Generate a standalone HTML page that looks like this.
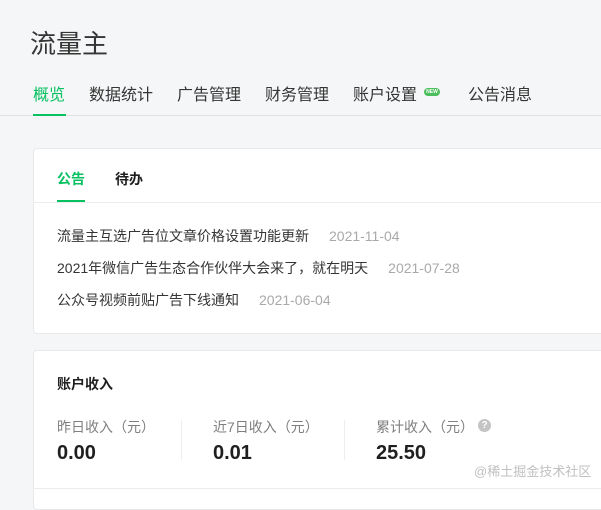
<!DOCTYPE html><html><head><meta charset="utf-8"><style>
*{margin:0;padding:0;box-sizing:border-box}
body{width:601px;height:492px;overflow:hidden;background:#f5f6f7;font-family:"Liberation Sans","Noto Sans CJK SC",sans-serif;color:#353535;position:relative}
.a{position:absolute;white-space:nowrap}
.nav{font-size:16px;top:86px;line-height:20px;color:#353535}
.card{position:absolute;left:33px;width:600px;background:#fff;border:1px solid #e7e8ea;border-radius:4px}
.item{font-size:14px;line-height:18px;color:#353535}
.item span{color:#a9a9a9;margin-left:20px}
.lab{font-size:14px;color:#7f7f7f;top:418px;line-height:18px}
.val{font-size:20px;font-weight:bold;color:#1f1f1f;top:442px;line-height:22px}
</style></head><body>
<div class="a" style="left:30px;top:28px;font-size:26px;line-height:32px;color:#353535">流量主</div>
<div class="a nav" style="left:33px;color:#07c160">概览</div>
<div class="a nav" style="left:89px">数据统计</div>
<div class="a nav" style="left:177px">广告管理</div>
<div class="a nav" style="left:265px">财务管理</div>
<div class="a nav" style="left:353px">账户设置</div>
<div class="a" style="left:424px;top:88px;width:16px;height:8px;border-radius:4px;background:#4cbf5c;font-size:5px;color:#fff;text-align:center;line-height:8px;font-weight:bold">NEW</div>
<div class="a nav" style="left:468px">公告消息</div>
<div class="a" style="left:0;top:115px;width:601px;height:1px;background:#e0e1e3"></div>
<div class="a" style="left:33px;top:114px;width:33px;height:2px;background:#07c160"></div>

<div class="card" style="top:148px;height:186px">
<div class="a" style="left:23px;top:20px;font-size:14px;font-weight:bold;color:#07c160">公告</div>
<div class="a" style="left:81px;top:20px;font-size:14px;font-weight:bold;color:#1f1f1f">待办</div>
<div class="a" style="left:0;top:53px;width:600px;height:1px;background:#eceded"></div>
<div class="a" style="left:23px;top:51px;width:28px;height:2px;background:#07c160"></div>
<div class="a item" style="left:23px;top:78px">流量主互选广告位文章价格设置功能更新<span>2021-11-04</span></div>
<div class="a item" style="left:23px;top:110px">2021年微信广告生态合作伙伴大会来了，就在明天<span>2021-07-28</span></div>
<div class="a item" style="left:23px;top:142px">公众号视频前贴广告下线通知<span>2021-06-04</span></div>
</div>

<div class="card" style="top:350px;height:160px"></div>
<div class="a" style="left:57px;top:374px;font-size:14px;font-weight:bold;color:#1f1f1f">账户收入</div>
<div class="a lab" style="left:57px">昨日收入（元）</div>
<div class="a val" style="left:57px">0.00</div>
<div class="a" style="left:181px;top:420px;width:1px;height:40px;background:#eee"></div>
<div class="a lab" style="left:213px">近7日收入（元）</div>
<div class="a val" style="left:213px">0.01</div>
<div class="a" style="left:344px;top:420px;width:1px;height:40px;background:#eee"></div>
<div class="a lab" style="left:376px">累计收入（元）</div>
<div class="a val" style="left:376px">25.50</div>
<div class="a" style="left:478px;top:419px;width:13px;height:13px;border-radius:50%;background:#c4c4c4;color:#fff;font-size:10px;font-weight:bold;text-align:center;line-height:13px">?</div>
<div class="a" style="left:33px;top:488px;width:568px;height:1px;background:#eceded"></div>
<div class="a" style="left:474px;top:461px;font-size:13px;color:#c0c0c0">@稀土掘金技术社区</div>
</body></html>
